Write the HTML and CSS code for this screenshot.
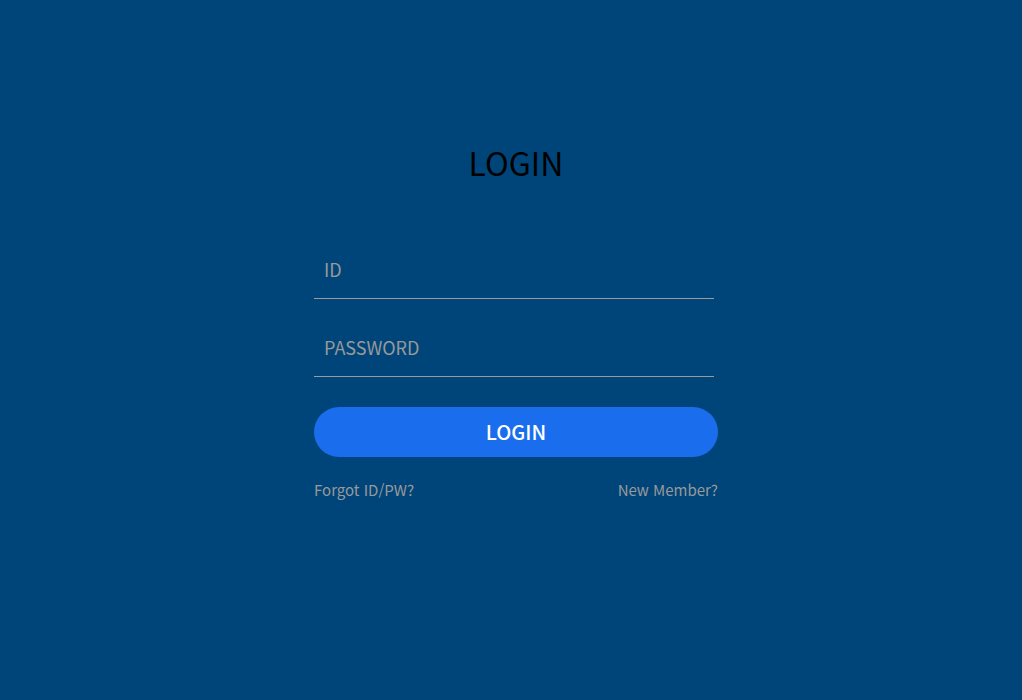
FILE: index.html
```
<!DOCTYPE html>
<html lang="ko">
<head>
<meta charset="utf-8">
<title>Login</title>
<link rel="stylesheet" href="styles.css">
</head>
<body>
<div class="page">
  <main class="login">
    <h1 class="title">LOGIN</h1>
    <form class="form">
      <label class="field"><input type="text" placeholder="ID"></label>
      <label class="field"><input type="password" placeholder="PASSWORD"></label>
      <button type="button" class="btn">LOGIN</button>
      <div class="links">
        <a href="#">Forgot ID/PW?</a>
        <a href="#">New Member?</a>
      </div>
    </form>
  </main>
</div>
</body>
</html>
```
FILE: styles.css
```
html, body {
  margin: 0;
  height: 100%;
  background: #00457a;
}
body {
  font-family: "Noto Sans CJK KR", "Noto Sans", sans-serif;
}
.page {
  display: flex;
  justify-content: center;
  padding-left: 10px;
  padding-top: 138px;
}
.login {
  width: 404px;
}
.title {
  margin: 0;
  text-align: center;
  font-size: 32px;
  font-weight: 400;
  color: #000;
  line-height: 48px;
}
.form {
  display: flex;
  flex-direction: column;
  margin-top: 55px;
}
.field {
  display: block;
  width: 400px;
  border-bottom: 1px solid #9a9a9a;
  margin-bottom: 20px;
}
.field input {
  display: block;
  width: 100%;
  box-sizing: border-box;
  height: 57px;
  padding: 0 10px 2px;
  border: 0;
  background: transparent;
  font-family: inherit;
  font-size: 18px;
  color: #fff;
  outline: none;
}
.field input::placeholder {
  color: #999;
}
.btn {
  margin-top: 10px;
  height: 50px;
  padding: 0 0 2px;
  border: 0;
  border-radius: 25px;
  background: #1a6eee;
  color: #fff;
  font-family: inherit;
  font-size: 20px;
  font-weight: 500;
  cursor: pointer;
}
.links {
  display: flex;
  justify-content: space-between;
  margin-top: 22px;
}
.links a {
  color: #999;
  text-decoration: none;
  font-size: 15px;
}
```
